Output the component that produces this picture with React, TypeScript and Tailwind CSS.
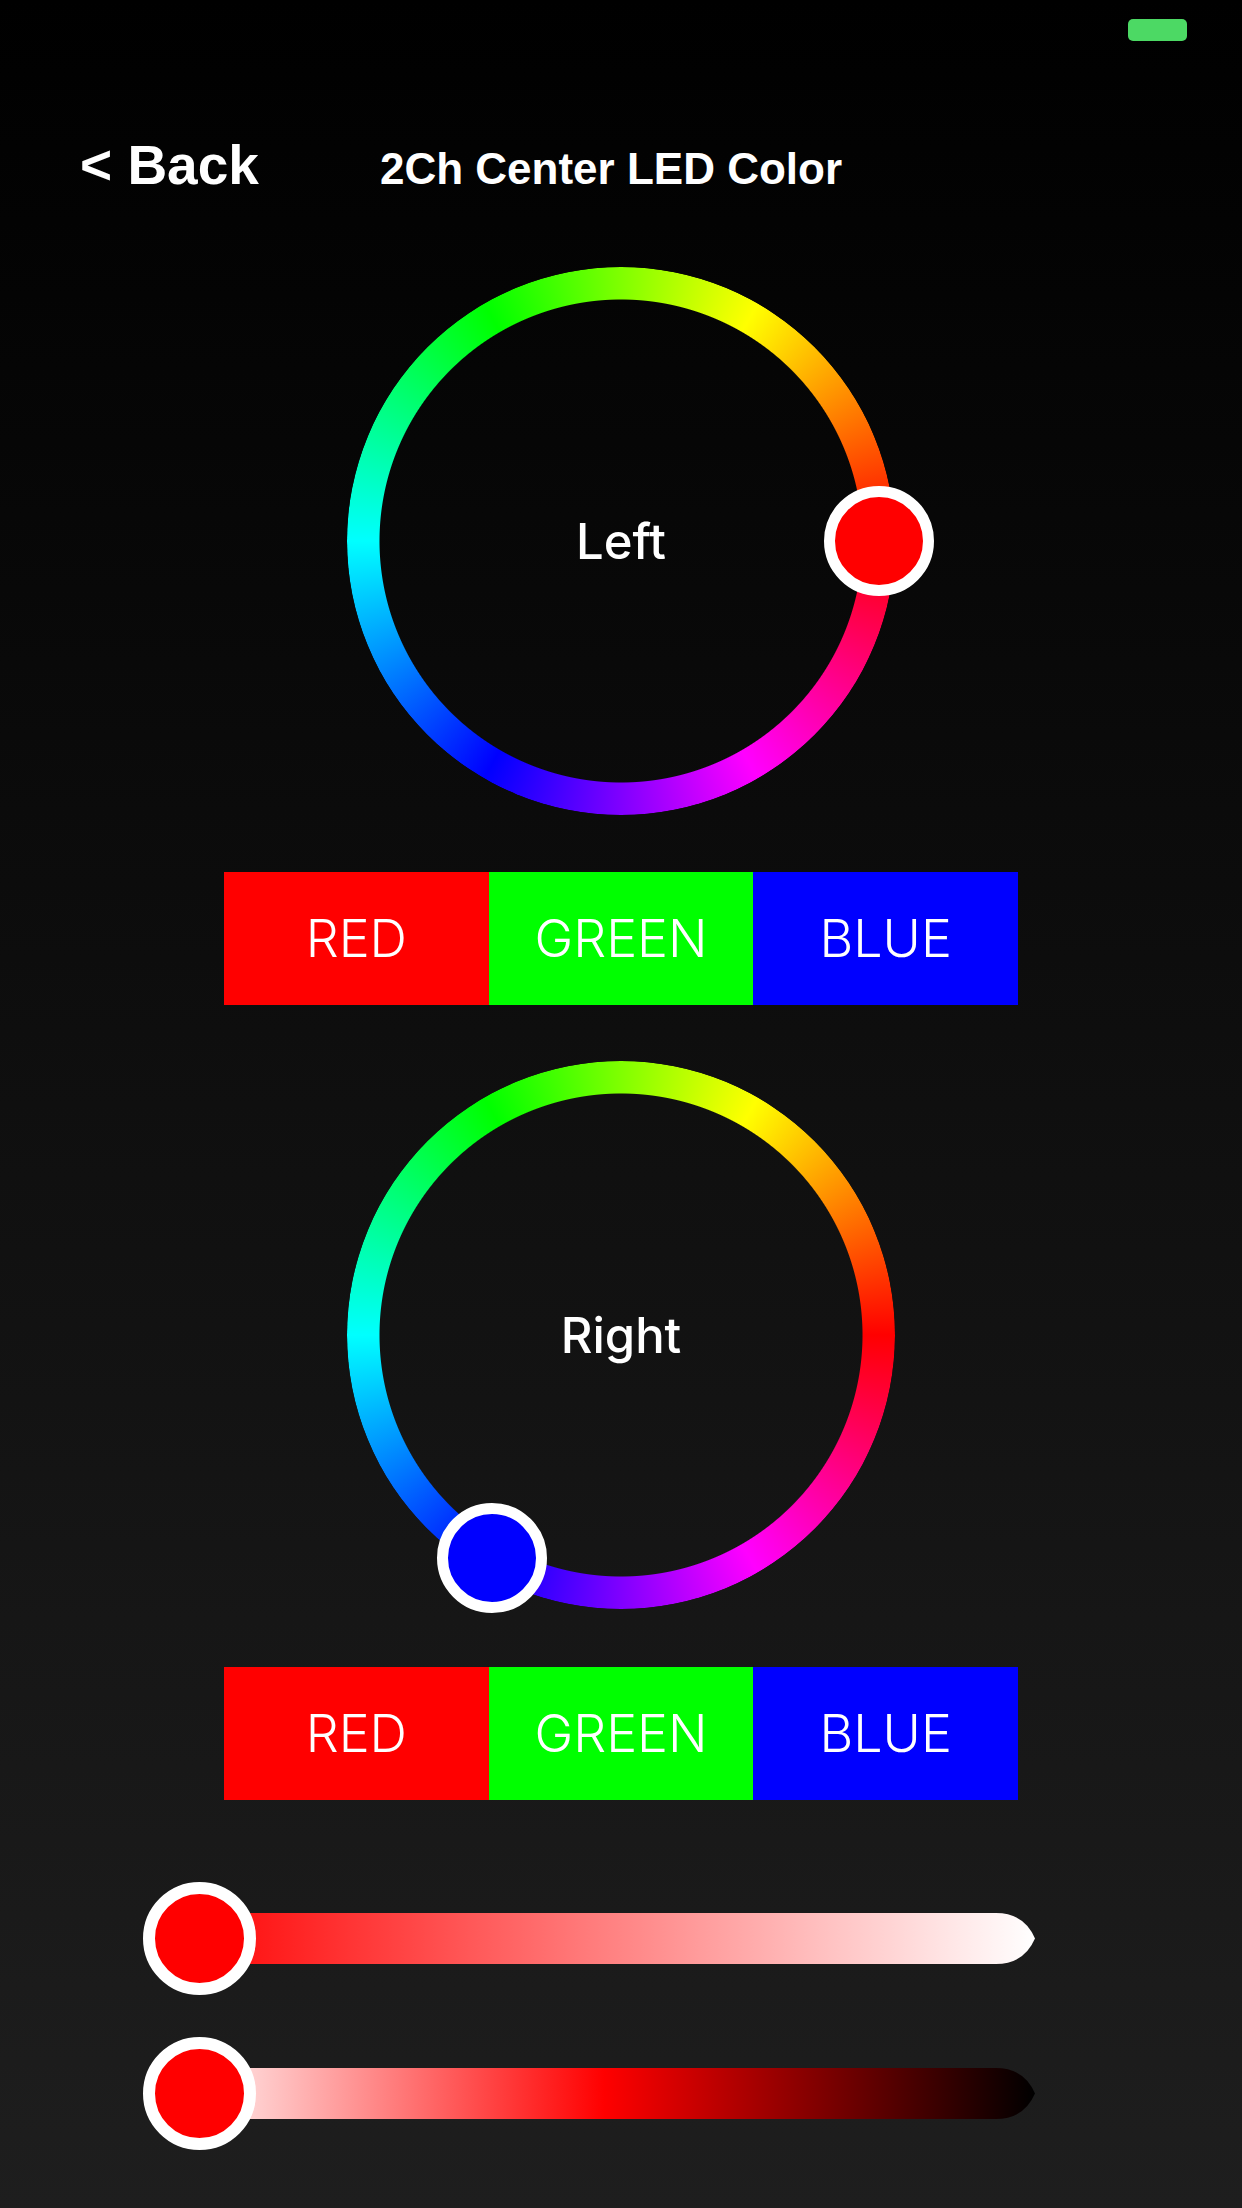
import React from 'react';

const RING = 548;
const BAND = 33;
const KNOB = 110;

// hue wheel with a knob sitting on the band; hue measured counter-clockwise from 3 o'clock
function HueRing({ label, hue, knobClass }: { label: string; hue: number; knobClass: string }) {
  const r = RING / 2 - BAND / 2;
  const a = (hue * Math.PI) / 180;
  const left = RING / 2 + r * Math.cos(a) - KNOB / 2;
  const top = RING / 2 - r * Math.sin(a) - KNOB / 2;

  return (
    <div className="relative mx-auto grid h-[548px] w-[548px]">
      <div className="col-start-1 row-start-1 rounded-full bg-[conic-gradient(from_90deg,#ff0000,#ff00ff,#0000ff,#00ffff,#00ff00,#ffff00,#ff0000)] [mask:radial-gradient(closest-side,transparent_calc(100%_-_33px),#000_calc(100%_-_32px))]" />
      <span className="col-start-1 row-start-1 place-self-center font-['Inter',sans-serif] text-[49px] font-medium leading-none text-white">
        {label}
      </span>
      <span
        className={`absolute h-[110px] w-[110px] rounded-full border-[11px] border-white ${knobClass}`}
        style={{ left, top }}
      />
    </div>
  );
}

function ChannelButtons() {
  return (
    <div className="mx-auto flex h-[133px] w-[794px] font-['Inter',sans-serif] text-[52px] font-light text-white">
      <button className="flex flex-1 items-center justify-center bg-[#ff0000]">RED</button>
      <button className="flex flex-1 items-center justify-center bg-[#00ff00]">GREEN</button>
      <button className="flex flex-1 items-center justify-center bg-[#0000ff]">BLUE</button>
    </div>
  );
}

function Slider({ id, stops }: { id: string; stops: { at: string; color: string }[] }) {
  return (
    <div className="relative ml-[143px] flex h-[113px] w-[892px] items-center">
      <svg className="ml-[30px]" width="862" height="51" viewBox="0 0 862 51">
        <defs>
          <linearGradient id={id} x1="0" x2="1" y1="0" y2="0">
            {stops.map((s) => (
              <stop key={s.at} offset={s.at} stopColor={s.color} />
            ))}
          </linearGradient>
        </defs>
        <path d="M0 0H823Q851 0 862 25.5Q851 51 823 51H0Z" fill={`url(#${id})`} />
      </svg>
      <span className="absolute left-0 top-0 h-[113px] w-[113px] rounded-full border-[12px] border-white bg-[#ff0000]" />
    </div>
  );
}

export default function App() {
  return (
    <div className="min-h-screen w-full bg-[linear-gradient(to_bottom,#000000,#1e1e1e)] pb-10">
      {/* status bar */}
      <div className="flex h-[60px] justify-end pr-[55px] pt-[19px]">
        <div className="h-[22px] w-[59px] rounded-[5px] bg-[#4cd964]" />
      </div>

      {/* header */}
      <div className="mt-[78px] flex items-baseline pl-[80px] font-['Liberation_Sans',Arial,sans-serif] font-bold text-white">
        <button className="w-[300px] text-left text-[55px] leading-none">&lt; Back</button>
        <h1 className="text-[44px] leading-none">2Ch Center LED Color</h1>
      </div>

      <div className="mt-[74px]">
        <HueRing label="Left" hue={0} knobClass="bg-[#ff0000]" />
      </div>
      <div className="mt-[57px]">
        <ChannelButtons />
      </div>

      <div className="mt-[56px]">
        <HueRing label="Right" hue={240} knobClass="bg-[#0000ff]" />
      </div>
      <div className="mt-[58px]">
        <ChannelButtons />
      </div>

      <div className="mt-[82px] flex flex-col gap-[42px]">
        <Slider
          id="sat"
          stops={[
            { at: '0%', color: '#ff0000' },
            { at: '100%', color: '#ffffff' },
          ]}
        />
        <Slider
          id="lum"
          stops={[
            { at: '0%', color: '#ffffff' },
            { at: '50%', color: '#ff0000' },
            { at: '100%', color: '#000000' },
          ]}
        />
      </div>
    </div>
  );
}
